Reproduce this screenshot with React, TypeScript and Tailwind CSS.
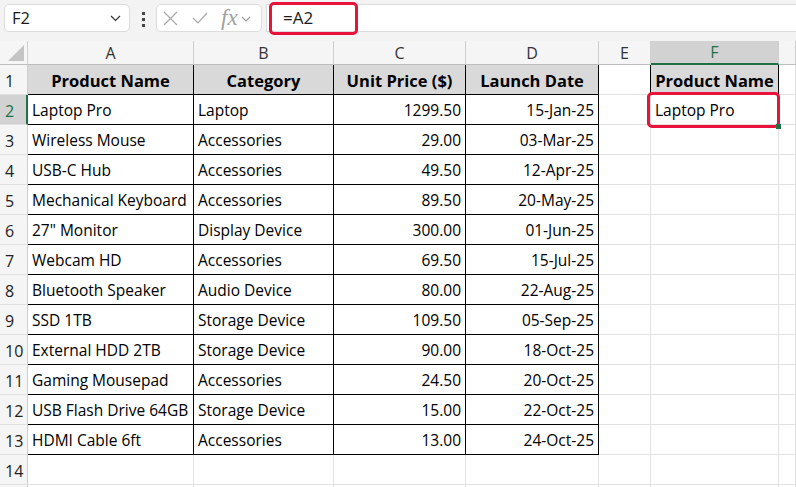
import React from 'react';

const COLS = [
    { key: 'A', w: 'w-[166px] shrink-0' },
    { key: 'B', w: 'w-[140px] shrink-0' },
    { key: 'C', w: 'w-[132px] shrink-0' },
    { key: 'D', w: 'w-[133px] shrink-0' },
    { key: 'E', w: 'w-[52px] shrink-0' },
    { key: 'F', w: 'w-[128px] shrink-0' },
    { key: 'G', w: 'flex-1' },
];

const HEADERS = ['Product Name', 'Category', 'Unit Price ($)', 'Launch Date'];

const DATA = [
    ['Laptop Pro', 'Laptop', '1299.50', '15-Jan-25'],
    ['Wireless Mouse', 'Accessories', '29.00', '03-Mar-25'],
    ['USB-C Hub', 'Accessories', '49.50', '12-Apr-25'],
    ['Mechanical Keyboard', 'Accessories', '89.50', '20-May-25'],
    ['27" Monitor', 'Display Device', '300.00', '01-Jun-25'],
    ['Webcam HD', 'Accessories', '69.50', '15-Jul-25'],
    ['Bluetooth Speaker', 'Audio Device', '80.00', '22-Aug-25'],
    ['SSD 1TB', 'Storage Device', '109.50', '05-Sep-25'],
    ['External HDD 2TB', 'Storage Device', '90.00', '18-Oct-25'],
    ['Gaming Mousepad', 'Accessories', '24.50', '20-Oct-25'],
    ['USB Flash Drive 64GB', 'Storage Device', '15.00', '22-Oct-25'],
    ['HDMI Cable 6ft', 'Accessories', '13.00', '24-Oct-25'],
];

const cellText = (r: number, c: number) => {
    if (r === 1) {
        if (c < 4) return HEADERS[c];
        if (c === 5) return 'Product Name';
        return '';
    }
    if (r >= 2 && r <= 13 && c < 4) return DATA[r - 2][c];
    if (r === 2 && c === 5) return 'Laptop Pro';
    return '';
};

const borderFor = (r: number, c: number) => {
    const inTable = r >= 1 && r <= 13 && c < 4;
    if (inTable) return 'border-r border-b border-r-black border-b-black';
    if (r === 1 && c === 4) return 'border-r border-b border-r-black border-b-[#e1e1e1]';
    if (r === 1 && c === 5) return 'border-r border-b border-r-black border-b-black';
    return 'border-r border-b border-r-[#e1e1e1] border-b-[#e1e1e1]';
};

const Cell = ({ r, c }: { r: number; c: number }) => {
    const text = cellText(r, c);
    const header = r === 1 && (c < 4 || c === 5);
    const right = !header && (c === 2 || c === 3);
    return (
        <div
            className={`${COLS[c].w} h-[30px] flex items-center px-[4px] pt-[3px] whitespace-nowrap overflow-visible ${borderFor(r, c)} ${
                header ? 'bg-[#d9d9d9] font-bold text-[16.5px] justify-center' : right ? 'justify-end' : 'justify-start'
            }`}
        >
            {text}
        </div>
    );
};

const App = () => {
    const rows = Array.from({ length: 15 }, (_, i) => i + 1);

    return (
        <div className="w-[796px] h-[487px] overflow-hidden bg-white text-black font-['Open_Sans','Noto_Sans',sans-serif]">
            {/* Formula bar */}
            <div className="relative h-[41px] bg-[#f3f3f3] flex items-start pt-[4px]">
                <div className="ml-[4px] w-[126px] h-[28px] bg-white border border-[#dcdcdc] rounded-[5px] flex items-center justify-between pl-[7px] pr-[8px] text-[16.5px] text-[#1a1a1a]">
                    <span>F2</span>
                    <svg width="11" height="7" viewBox="0 0 11 7" fill="none" stroke="#333" strokeWidth="1.2">
                        <path d="M1 1l4.5 4.5L10 1" />
                    </svg>
                </div>
                <div className="ml-[12px] mt-[8px] flex flex-col gap-[3px]">
                    <span className="w-[3px] h-[3px] bg-[#444]" />
                    <span className="w-[3px] h-[3px] bg-[#444]" />
                    <span className="w-[3px] h-[3px] bg-[#444]" />
                </div>
                <div className="ml-[11px] w-[106px] h-[28px] bg-white border border-[#dcdcdc] rounded-[5px] flex items-center pl-[6px]">
                    <svg width="15" height="15" viewBox="0 0 15 15" fill="none" stroke="#a8a8a8" strokeWidth="1.2">
                        <path d="M1 1l13 13M14 1L1 14" />
                    </svg>
                    <svg className="ml-[14px]" width="16" height="12" viewBox="0 0 16 12" fill="none" stroke="#a8a8a8" strokeWidth="1.2">
                        <path d="M1 6l5 5L15 1" />
                    </svg>
                    <span className="ml-[13px] font-['Liberation_Serif',serif] italic text-[23px] leading-none text-[#a0a0a0] -mt-[2px]">fx</span>
                    <svg className="ml-[3px] mt-[2px]" width="10" height="6" viewBox="0 0 10 6" fill="none" stroke="#999" strokeWidth="1.1">
                        <path d="M1 1l4 4 4-4" />
                    </svg>
                </div>
                <div className="ml-[4px] flex-1 h-[28px] bg-white border-y border-l border-[#dcdcdc] flex items-center pl-[16px] text-[17px] text-[#1a1a1a]">
                    =A2
                </div>
                <div className="absolute left-[269px] top-[2px] w-[89px] h-[33px] border-[3px] border-[#e8123a] rounded-[5px]" />
            </div>

            {/* Grid */}
            <div className="relative text-[15.5px]">
                <div className="flex h-[24px] bg-[#f5f5f5] text-[16px] text-[#333]">
                    <div className="w-[28px] shrink-0 border-r border-b border-r-[#cfcfcf] border-b-[#bdbdbd] relative">
                        <svg className="absolute left-[8px] top-[4px]" width="16" height="16" viewBox="0 0 16 16">
                            <path d="M16 0L16 16L0 16Z" fill="#c4c4c4" />
                        </svg>
                    </div>
                    {COLS.map((col) => (
                        <div
                            key={col.key}
                            className={`${col.w} flex items-center justify-center border-r border-r-[#cfcfcf] ${
                                col.key === 'F'
                                    ? 'bg-[#d2d2d2] text-[#1e7145] border-b-2 border-b-[#1e7145]'
                                    : 'border-b border-b-[#bdbdbd]'
                            }`}
                        >
                            {col.key === 'G' ? '' : col.key}
                        </div>
                    ))}
                </div>

                {rows.map((r) => (
                    <div key={r} className="flex h-[30px]">
                        <div
                            className={`w-[28px] shrink-0 flex items-center pl-[5px] pt-[3px] text-[16px] border-b border-b-[#e1e1e1] ${
                                r === 2
                                    ? 'bg-[#d2d2d2] text-[#1e7145] border-r-2 border-r-[#1e7145]'
                                    : 'bg-[#f5f5f5] text-[#222] border-r border-r-[#cfcfcf]'
                            }`}
                        >
                            {r < 15 ? r : ''}
                        </div>
                        {COLS.map((col, c) => (
                            <Cell key={col.key} r={r} c={c} />
                        ))}
                    </div>
                ))}

                {/* highlight on F2 */}
                <div className="absolute left-[647px] top-[51px] w-[133px] h-[36px] border-[3px] border-[#e8123a] rounded-[5px]" />
                <div className="absolute left-[776px] top-[83px] w-[5px] h-[5px] bg-[#1e7145]" />
            </div>
        </div>
    );
};

export default App;
